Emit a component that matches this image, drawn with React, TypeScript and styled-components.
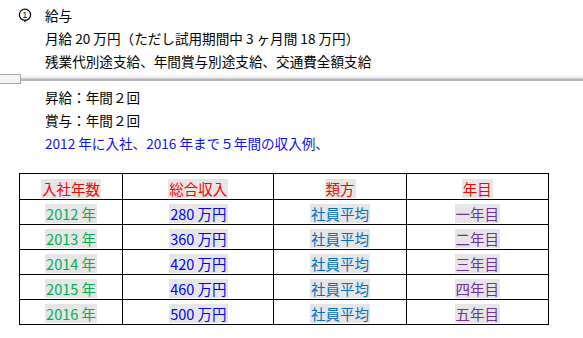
import React from 'react'
import styled, { createGlobalStyle } from 'styled-components'

const GlobalStyle = createGlobalStyle`
  body {
    margin: 0;
    background: #ffffff;
    font-family: "Noto Sans CJK JP", "Noto Sans", sans-serif;
  }
`

const rows = [
  { year: '2012 年', income: '280 万円', kind: '社員平均', nth: '一年目' },
  { year: '2013 年', income: '360 万円', kind: '社員平均', nth: '二年目' },
  { year: '2014 年', income: '420 万円', kind: '社員平均', nth: '三年目' },
  { year: '2015 年', income: '460 万円', kind: '社員平均', nth: '四年目' },
  { year: '2016 年', income: '500 万円', kind: '社員平均', nth: '五年目' },
]

function App() {
  return (
    <Page>
      <GlobalStyle />
      <Section>
        <Item>
          <Marker>
            <svg width="14" height="15" viewBox="0 0 14 15">
              <circle cx="7" cy="6.8" r="5.6" fill="none" stroke="#000" strokeWidth="1.2" />
              <text x="6.8" y="10" fontSize="8.5" textAnchor="middle" fontFamily="Liberation Sans, sans-serif">1</text>
              <path d="M7 12 L7 13.8" stroke="#000" strokeWidth="1.6" />
            </svg>
          </Marker>
          <Line>給与</Line>
        </Item>
        <Body>
          <Line>月給 20 万円（ただし試用期間中 3 ヶ月間 18 万円）</Line>
          <Line>残業代別途支給、年間賞与別途支給、交通費全額支給</Line>
        </Body>
      </Section>

      <Divider>
        <DividerBox />
        <DividerBar />
      </Divider>

      <Body>
        <Line>昇給：年間２回</Line>
        <Line>賞与：年間２回</Line>
        <Line $blue>2012 年に入社、2016 年まで５年間の収入例、</Line>
      </Body>

      <Table>
        <colgroup>
          <col style={{ width: 103 }} />
          <col style={{ width: 151 }} />
          <col style={{ width: 132 }} />
          <col style={{ width: 142 }} />
        </colgroup>
        <thead>
          <tr>
            <HeadCell><Mark $color="#ff0000">入社年数</Mark></HeadCell>
            <HeadCell><Mark $color="#ff0000">総合収入</Mark></HeadCell>
            <HeadCell><Mark $color="#ff0000">類方</Mark></HeadCell>
            <HeadCell><Mark $color="#ff0000">年目</Mark></HeadCell>
          </tr>
        </thead>
        <tbody>
          {rows.map((r) => (
            <tr key={r.year}>
              <Cell><Mark $color="#00b050">{r.year}</Mark></Cell>
              <Cell><Mark $color="#0000ff">{r.income}</Mark></Cell>
              <Cell><Mark $color="#0070c0">{r.kind}</Mark></Cell>
              <Cell><Mark $color="#7030a0">{r.nth}</Mark></Cell>
            </tr>
          ))}
        </tbody>
      </Table>
    </Page>
  )
}

export default App

const Page = styled.div`
  width: 583px;
  height: 338px;
  padding-top: 4px;
  box-sizing: border-box;
  overflow: hidden;
`

const Section = styled.div`
  display: flex;
  flex-direction: column;
`

const Item = styled.div`
  display: flex;
  align-items: center;
  padding-left: 18px;
`

const Marker = styled.div`
  width: 27px;
  height: 23px;
  display: flex;
  align-items: center;
`

const Body = styled.div`
  display: flex;
  flex-direction: column;
  padding-left: 45px;
`

const Line = styled.div<{ $blue?: boolean }>`
  height: 23px;
  line-height: 23px;
  font-size: 13.6px;
  color: ${(p) => (p.$blue ? '#1010ff' : '#000000')};
  white-space: nowrap;
`

const Divider = styled.div`
  display: flex;
  align-items: flex-start;
  height: 13px;
  padding-top: 1px;
  box-sizing: border-box;
`

const DividerBox = styled.div`
  width: 21px;
  height: 10px;
  border: 1px solid #a8a8a8;
  border-left: none;
  box-sizing: border-box;
  background: #f4f4f6;
  flex: none;
`

const DividerBar = styled.div`
  flex: 1;
  height: 6px;
  background: linear-gradient(#ffffff, #ececef 60%, #c8c8cc 80%, #a4a4aa 100%);
  border-bottom: 1px solid #b8b8be;
`

const Table = styled.table`
  margin: 18px 0 0 19px;
  border-collapse: collapse;
  table-layout: fixed;
  width: 530px;
  font-family: "Noto Sans CJK JP", "Noto Sans", sans-serif;
  font-size: 14.5px;
`

const HeadCell = styled.th`
  height: 25px;
  border: 1px solid #000000;
  padding: 0;
  text-align: center;
  font-weight: normal;
`

const Cell = styled.td`
  height: 24px;
  border: 1px solid #000000;
  padding: 0;
  text-align: center;
`

const Mark = styled.span<{ $color: string }>`
  display: inline-block;
  background: #e6e6e6;
  color: ${(p) => p.$color};
  line-height: 19px;
  padding: 0 1px;
  vertical-align: middle;
`
